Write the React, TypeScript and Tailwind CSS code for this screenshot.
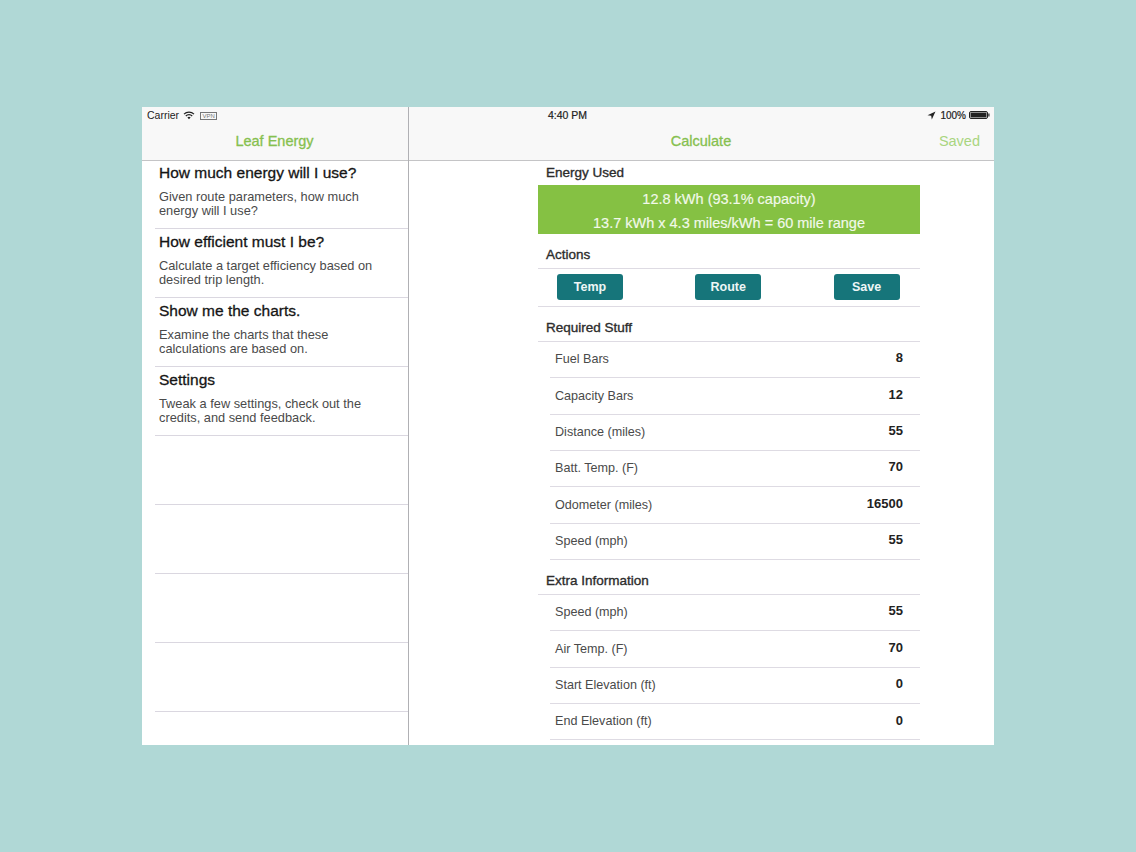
const font = { fontFamily: '"Liberation Sans", Arial, sans-serif' };

const menu = [
  ["How much energy will I use?", "Given route parameters, how much", "energy will I use?"],
  ["How efficient must I be?", "Calculate a target efficiency based on", "desired trip length."],
  ["Show me the charts.", "Examine the charts that these", "calculations are based on."],
  ["Settings", "Tweak a few settings, check out the", "credits, and send feedback."],
];

const required = [
  ["Fuel Bars", "8"],
  ["Capacity Bars", "12"],
  ["Distance (miles)", "55"],
  ["Batt. Temp. (F)", "70"],
  ["Odometer (miles)", "16500"],
  ["Speed (mph)", "55"],
];

const extra = [
  ["Speed (mph)", "55"],
  ["Air Temp. (F)", "70"],
  ["Start Elevation (ft)", "0"],
  ["End Elevation (ft)", "0"],
];

function Row({ label, value }: { label: string; value: string }) {
  return (
    <div className="ml-3 h-[36.35px] flex items-center justify-between border-b border-[#dedbe3] pl-[5px] pr-[17px] text-[12.6px]">
      <span className="text-[#4a4a4a]">{label}</span>
      <span className="text-[13px] font-bold text-[#222] -mt-[3px]">{value}</span>
    </div>
  );
}

function Section({ title }: { title: string }) {
  return (
    <div className="h-[35px] pl-2 pt-[13px] text-[13.5px] leading-[15px] text-[#2c2c2c] [-webkit-text-stroke:0.35px_#2c2c2c] border-b border-[#dedbe3]">
      {title}
    </div>
  );
}

function Btn({ children }: { children: string }) {
  return (
    <div className="w-[66px] h-[26px] rounded-[3px] bg-[#16757a] flex items-center justify-center text-[#eef6f6] text-[12.5px] font-bold">
      {children}
    </div>
  );
}

export default function App() {
  return (
    <div style={font} className="w-[1136px] h-[852px] bg-[#b0d8d6] pt-[107px] pl-[142px] overflow-hidden">
      <div className="relative w-[852px] h-[638px] bg-white flex overflow-hidden">
        {/* Left master pane */}
        <div className="w-[267px] shrink-0 border-r border-[#b0b0b4] flex flex-col">
          <div className="h-[54px] shrink-0 bg-[#f8f8f8] border-b border-[#c4c4c6]">
            <div className="h-[17px] flex items-center pl-[5px] text-[10.5px] text-[#222]">
              <span>Carrier</span>
              <svg width="12" height="9" viewBox="0 0 12 9" className="ml-1">
                <path d="M1 3.2a7 7 0 0 1 10 0M2.8 5a4.5 4.5 0 0 1 6.4 0" fill="none" stroke="#222" strokeWidth="1.2" />
                <path d="M4.4 6.5a2.3 2.3 0 0 1 3.2 0L6 8.2z" fill="#222" />
              </svg>
              <span className="ml-[5px] w-[17px] h-[8px] border border-[#777] text-[6px] leading-[6px] text-center text-[#777]">VPN</span>
            </div>
            <div className="h-[36px] flex items-center justify-center text-[14.5px] text-[#86c04f] [-webkit-text-stroke:0.3px_#86c04f] pb-[1px] pr-[1px]">
              Leaf Energy
            </div>
          </div>
          <div className="flex-1 pl-[13px] -mt-px">
            {menu.map(([t, a, b]) => (
              <div key={t} className="h-[69px] border-b border-[#dad7e0] pl-1 pt-[3px]">
                <div className="text-[15.5px] leading-[19px] text-[#151515] [-webkit-text-stroke:0.3px_#151515]">{t}</div>
                <div className="mt-[8px] text-[12.8px] leading-[14px] text-[#4a4a4a]">
                  <div>{a}</div>
                  <div>{b}</div>
                </div>
              </div>
            ))}
            {[0, 1, 2, 3].map((i) => (
              <div key={i} className="h-[69px] border-b border-[#dad7e0]" />
            ))}
          </div>
        </div>

        {/* Right detail pane */}
        <div className="flex-1 flex flex-col min-w-0">
          <div className="h-[54px] shrink-0 bg-[#f8f8f8] border-b border-[#c4c4c6]">
            <div className="h-[17px] relative flex items-center pl-[139px] text-[10.5px] text-[#222]">
              <span className="[-webkit-text-stroke:0.2px_#222]">4:40 PM</span>
              <div className="absolute right-[4px] top-0 h-[17px] flex items-center gap-[3px]">
                <svg width="9" height="9" viewBox="0 0 9 9" className="mr-[1px]">
                  <path d="M8.5 0.5 L0.5 4.2 L4.2 4.8 L4.8 8.5 Z" fill="#222" />
                </svg>
                <span className="text-[10px] [-webkit-text-stroke:0.2px_#222]">100%</span>
                <svg width="21" height="9" viewBox="0 0 21 9">
                  <rect x="0.5" y="0.5" width="18" height="7" rx="1.5" fill="#fff" stroke="#222" />
                  <rect x="1.5" y="1.5" width="16" height="5" fill="#222" />
                  <rect x="19.3" y="2.5" width="1.2" height="3" fill="#222" />
                </svg>
              </div>
            </div>
            <div className="h-[36px] relative flex items-center justify-center text-[14.5px] pb-[1px]">
              <span className="text-[#86c04f] [-webkit-text-stroke:0.3px_#86c04f] -ml-[1px]">Calculate</span>
              <span className="absolute right-[14px] top-[7px] text-[#a9d580]">Saved</span>
            </div>
          </div>

          <div className="flex-1 overflow-hidden pl-[129px]">
            <div className="w-[382px]">
              <div className="h-[24px] pl-2 pt-[4px] text-[13.5px] leading-[15px] text-[#2c2c2c] [-webkit-text-stroke:0.35px_#2c2c2c]">Energy Used</div>
              <div className="h-[49px] bg-[#85c143] text-[#f2f9ea] text-[14.5px] text-center [-webkit-text-stroke:0.15px_#f2f9ea] flex flex-col justify-between pb-[2px] pt-[5px]">
                <div className="leading-[18px]">12.8 kWh (93.1% capacity)</div>
                <div className="leading-[18px]">13.7 kWh x 4.3 miles/kWh = 60 mile range</div>
              </div>
              <Section title="Actions" />
              <div className="h-[38px] border-b border-[#dedbe3] flex items-start justify-between pt-[5px] pl-[19px] pr-[20.5px]">
                <Btn>Temp</Btn>
                <Btn>Route</Btn>
                <Btn>Save</Btn>
              </div>
              <Section title="Required Stuff" />
              {required.map(([l, v]) => (
                <Row key={l} label={l} value={v} />
              ))}
              <Section title="Extra Information" />
              {extra.map(([l, v]) => (
                <Row key={l} label={l} value={v} />
              ))}
            </div>
          </div>
        </div>
      </div>
    </div>
  );
}
